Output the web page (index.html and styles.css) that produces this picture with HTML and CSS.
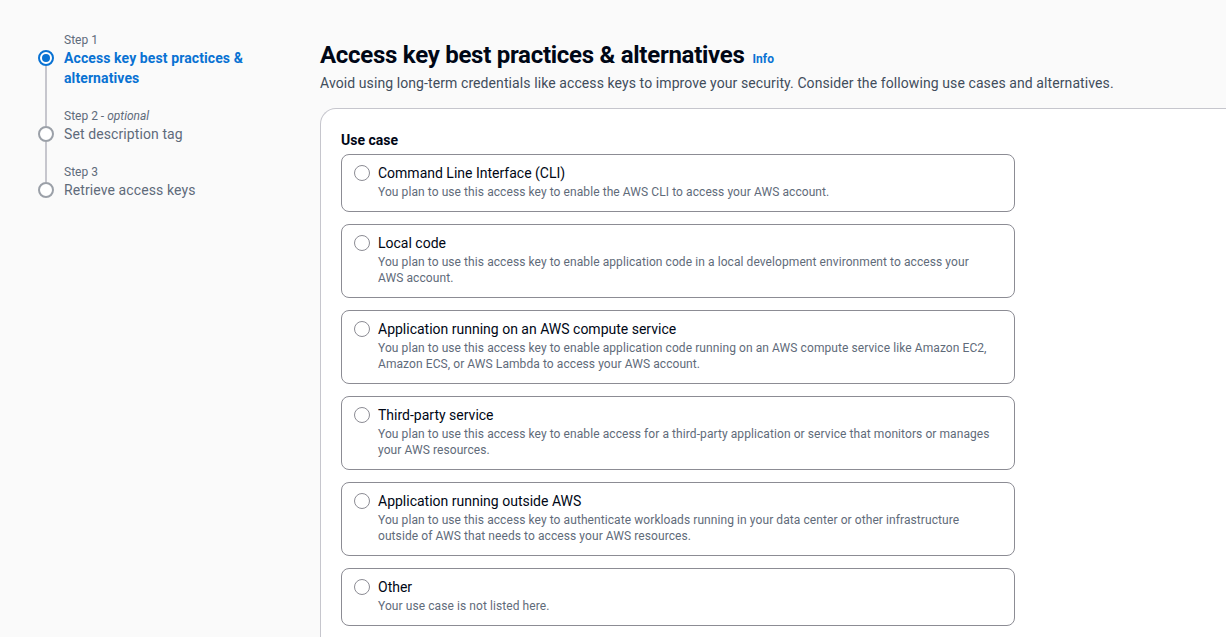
FILE: index.html
```html
<!DOCTYPE html>
<html lang="en">
<head>
<meta charset="utf-8">
<title>Create access key</title>
<link rel="stylesheet" href="styles.css">
</head>
<body>
<div class="layout">
  <nav class="steps">
    <ol class="step-list">
      <li class="step active">
        <div class="step-label">Step 1</div>
        <div class="step-row">
          <span class="step-dot"></span>
          <span class="step-name">Access key best practices &amp; alternatives</span>
        </div>
      </li>
      <li class="step">
        <div class="step-label">Step 2 - <i>optional</i></div>
        <div class="step-row">
          <span class="step-dot"></span>
          <span class="step-name">Set description tag</span>
        </div>
      </li>
      <li class="step last">
        <div class="step-label">Step 3</div>
        <div class="step-row">
          <span class="step-dot"></span>
          <span class="step-name">Retrieve access keys</span>
        </div>
      </li>
    </ol>
  </nav>
  <main class="main">
    <header class="header">
      <h1 class="title">Access key best practices &amp; alternatives <a class="info" href="#">Info</a></h1>
      <p class="subtitle">Avoid using long-term credentials like access keys to improve your security. Consider the following use cases and alternatives.</p>
    </header>
    <section class="card">
      <div class="field-label">Use case</div>
      <div class="tiles">
        <label class="tile">
          <span class="radio"></span>
          <span class="tile-text">
            <span class="tile-title">Command Line Interface (CLI)</span>
            <span class="tile-desc">You plan to use this access key to enable the AWS CLI to access your AWS account.</span>
          </span>
        </label>
        <label class="tile">
          <span class="radio"></span>
          <span class="tile-text">
            <span class="tile-title">Local code</span>
            <span class="tile-desc">You plan to use this access key to enable application code in a local development environment to access your AWS account.</span>
          </span>
        </label>
        <label class="tile">
          <span class="radio"></span>
          <span class="tile-text">
            <span class="tile-title">Application running on an AWS compute service</span>
            <span class="tile-desc">You plan to use this access key to enable application code running on an AWS compute service like Amazon EC2, Amazon ECS, or AWS Lambda to access your AWS account.</span>
          </span>
        </label>
        <label class="tile">
          <span class="radio"></span>
          <span class="tile-text">
            <span class="tile-title">Third-party service</span>
            <span class="tile-desc">You plan to use this access key to enable access for a third-party application or service that monitors or manages your AWS resources.</span>
          </span>
        </label>
        <label class="tile">
          <span class="radio"></span>
          <span class="tile-text">
            <span class="tile-title">Application running outside AWS</span>
            <span class="tile-desc">You plan to use this access key to authenticate workloads running in your data center or other infrastructure outside of AWS that needs to access your AWS resources.</span>
          </span>
        </label>
        <label class="tile">
          <span class="radio"></span>
          <span class="tile-text">
            <span class="tile-title">Other</span>
            <span class="tile-desc">Your use case is not listed here.</span>
          </span>
        </label>
      </div>
    </section>
  </main>
</div>
</body>
</html>
```

FILE: styles.css
```css
* { box-sizing: border-box; }
html, body { margin: 0; padding: 0; }
body {
  background: #fafafa;
  font-family: Roboto, "Noto Sans", sans-serif;
  color: #0f141a;
  font-size: 14px;
  line-height: 20px;
  height: 637px;
  overflow: hidden;
}
.layout {
  display: flex;
  padding-top: 32px;
}
.steps {
  width: 320px;
  flex: none;
  padding-left: 38px;
}
.step-list {
  list-style: none;
  margin: 0;
  padding: 0;
}
.step {
  position: relative;
  padding-bottom: 20px;
}
.step-label {
  font-size: 12px;
  line-height: 16px;
  color: #5f6b7a;
  padding-left: 26px;
}
.step-label i { font-style: italic; }
.step-row {
  display: flex;
  align-items: flex-start;
}
.step-dot {
  flex: none;
  width: 16px;
  height: 16px;
  margin-top: 2px;
  margin-right: 10px;
  border-radius: 50%;
  border: 2px solid #9ba0a8;
  background: #fff;
  position: relative;
}
.step-name {
  color: #5f6b7a;
  font-size: 14px;
  line-height: 20px;
  letter-spacing: 0.1px;
}
.step.active .step-dot {
  border: 2px solid #0972d3;
}
.step.active .step-dot::after {
  content: "";
  position: absolute;
  left: 2px; top: 2px;
  width: 8px; height: 8px;
  border-radius: 50%;
  background: #0972d3;
}
.step.active .step-name {
  color: #0972d3;
  font-weight: 700;
  width: 200px;
}
.step::before {
  content: "";
  position: absolute;
  left: 7px;
  top: 34px;
  bottom: -18px;
  width: 2px;
  background: #c6c6cd;
}
.step.last::before { display: none; }

.main {
  flex: 1;
  min-width: 0;
  padding-top: 7px;
}
.header { padding-bottom: 15px; }
.title {
  margin: 0;
  font-size: 24px;
  line-height: 32px;
  font-weight: 700;
  letter-spacing: -0.27px;
  color: #000716;
  display: flex;
  align-items: baseline;
  gap: 8px;
}
.info {
  font-size: 12px;
  font-weight: 700;
  letter-spacing: 0;
  color: #0972d3;
  text-decoration: none;
  line-height: 16px;
}
.subtitle {
  margin: 2px 0 0;
  color: #414d5c;
  font-size: 14px;
  line-height: 20px;
  letter-spacing: 0.09px;
}
.card {
  background: #fff;
  border-top: 1px solid #c6c6cd;
  border-left: 1px solid #c6c6cd;
  border-top-left-radius: 16px;
  padding: 20px 0 20px 20px;
  min-height: 600px;
}
.field-label {
  font-weight: 700;
  font-size: 14px;
  line-height: 22px;
  color: #000716;
  margin-bottom: 3px;
}
.tiles {
  display: flex;
  flex-direction: column;
  gap: 12px;
  width: 674px;
}
.tile {
  display: flex;
  align-items: flex-start;
  border: 1px solid #8c8c94;
  border-radius: 8px;
  padding: 8px 21px 11px 12px;
  cursor: pointer;
}
.radio {
  flex: none;
  width: 16px;
  height: 16px;
  margin-top: 2px;
  margin-right: 8px;
  border-radius: 50%;
  border: 1px solid #8c8c94;
  background: #fff;
}
.tile-text {
  display: flex;
  flex-direction: column;
}
.tile-title {
  font-size: 14px;
  line-height: 20px;
  color: #000716;
}
.tile-desc {
  margin-top: 1px;
  font-size: 12px;
  line-height: 16px;
  letter-spacing: 0.08px;
  color: #5f6b7a;
}
```
